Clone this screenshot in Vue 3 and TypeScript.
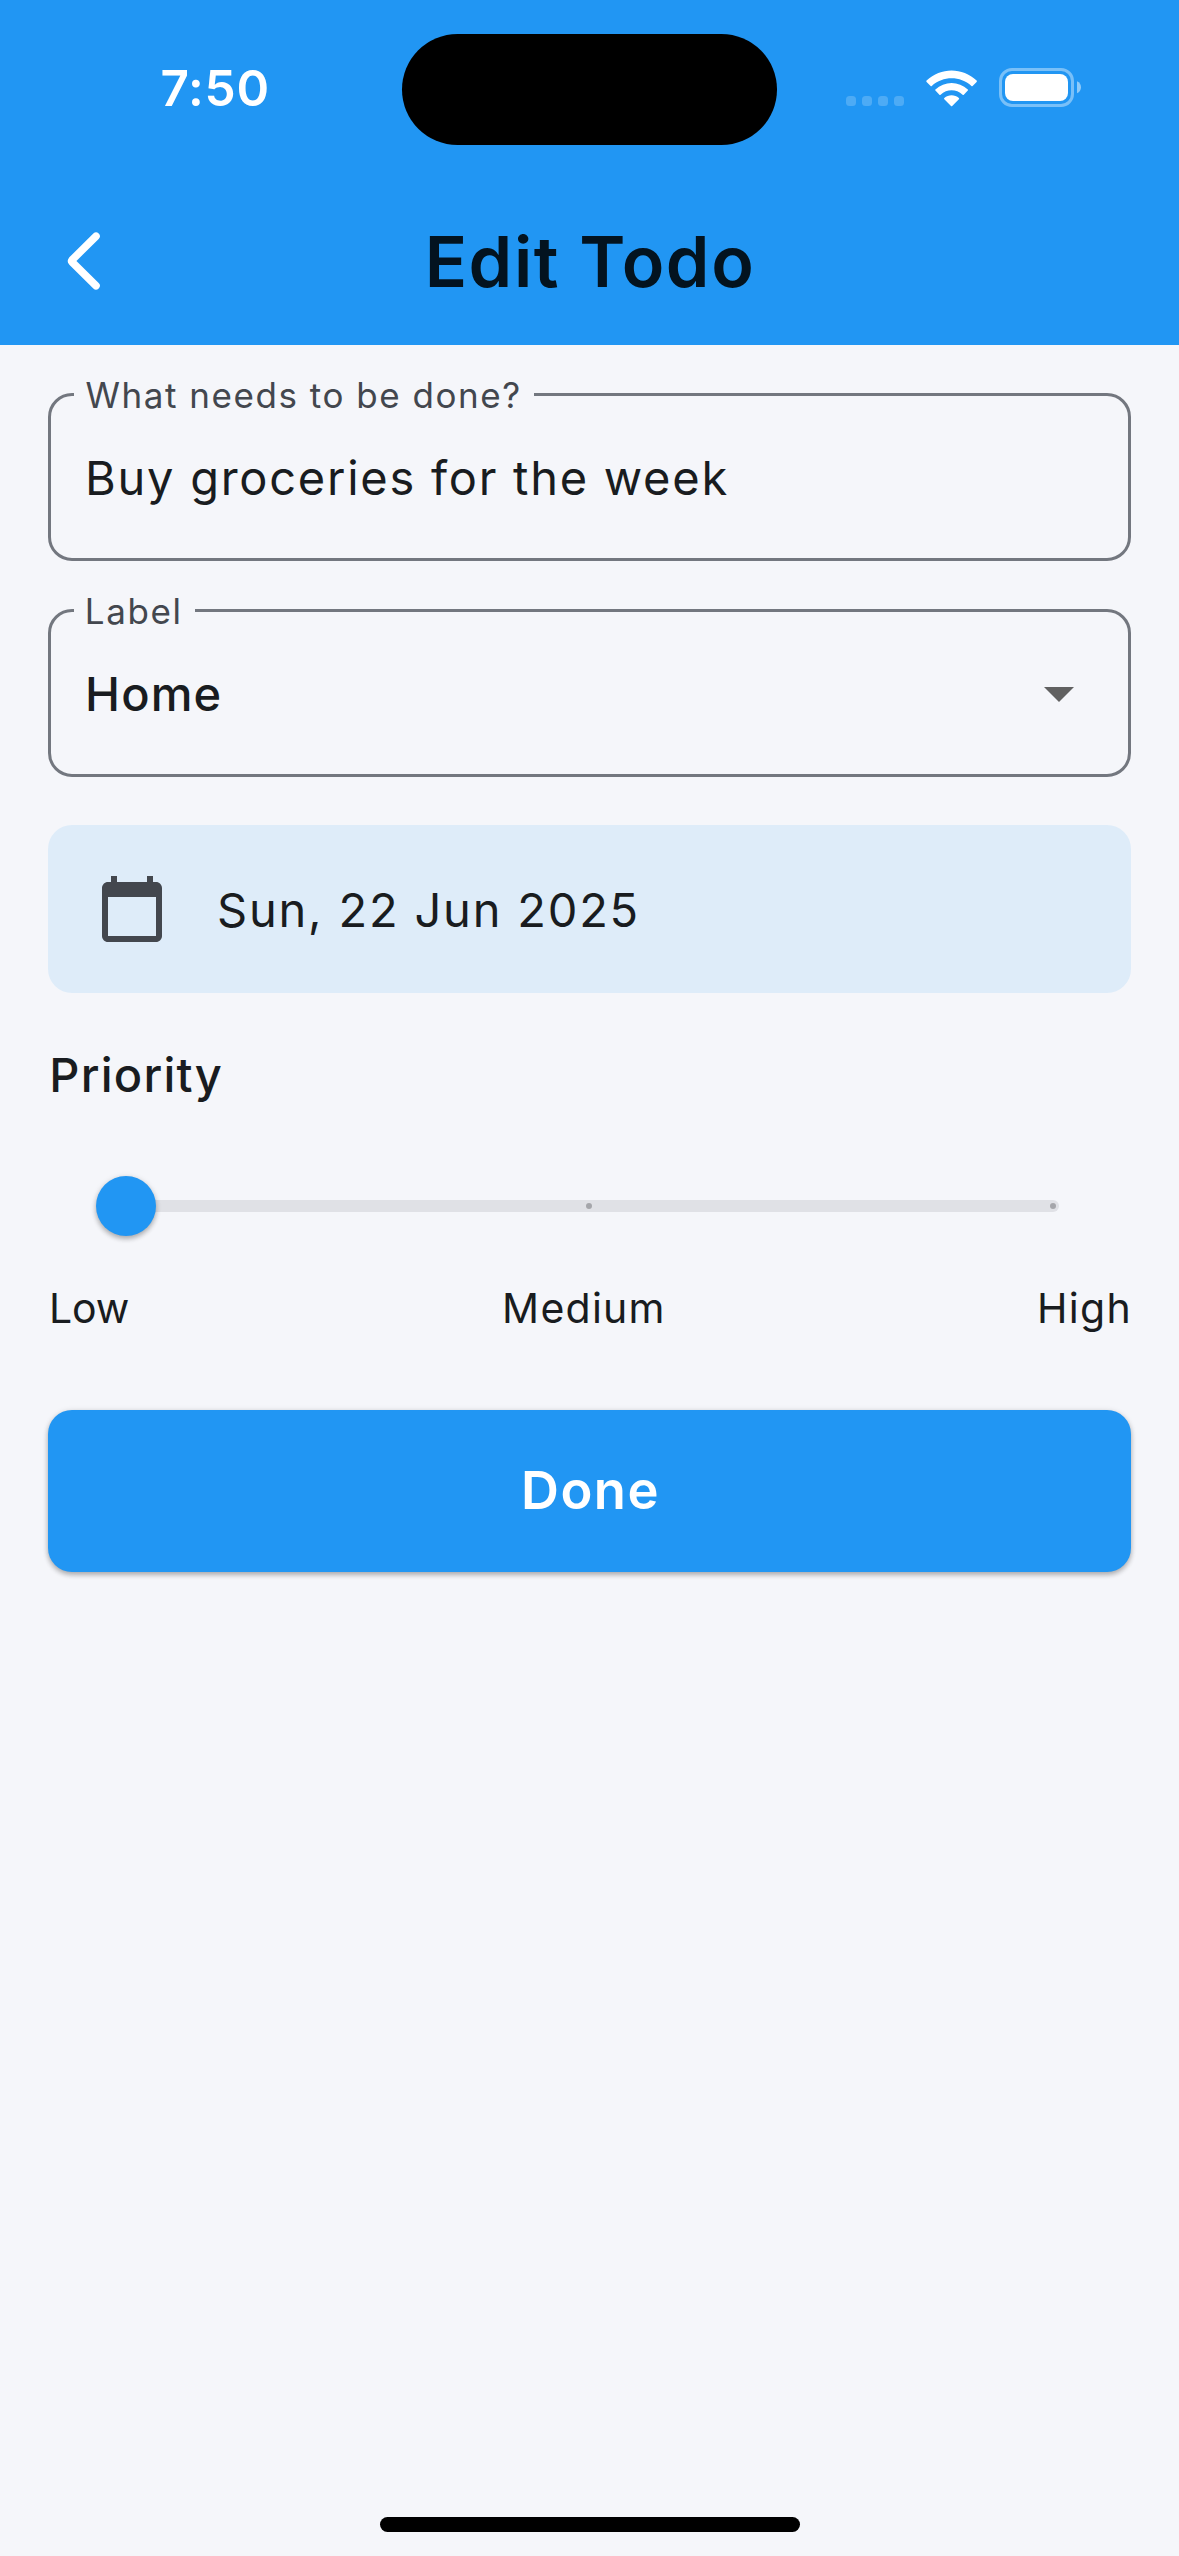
<script setup lang="ts">
import { ref } from 'vue'

const time = ref('7:50')
const title = ref('Edit Todo')
const task = ref('Buy groceries for the week')
const label = ref('Home')
const date = ref('Sun, 22 Jun 2025')
const cellularDots = [0, 1, 2, 3]
</script>

<template>
  <div class="screen">
    <header class="header">
      <div class="status-bar">
        <span class="time">{{ time }}</span>
        <div class="island"></div>
        <div class="indicators">
          <div class="cellular">
            <i v-for="dot in cellularDots" :key="dot"></i>
          </div>
          <svg class="wifi" width="52" height="39" viewBox="0 0 52 39">
            <g fill="#fff">
              <path d="M0.6 11.6 C0.2 12 0.2 12.5 0.6 12.9 L4.6 16.9 C5 17.3 5.4 17.3 5.8 16.9 C17 6.8 34.2 6.8 45.4 16.9 C45.8 17.3 46.2 17.3 46.6 16.9 L50.6 12.9 C51 12.5 51 12 50.6 11.6 C36.6 -1.9 14.6 -1.9 0.6 11.6 Z" />
              <path d="M9.4 20.4 C9 20.8 9 21.2 9.4 21.6 L13.4 25.7 C13.8 26.1 14.2 26 14.6 25.7 C20.9 19.9 30.3 19.9 36.6 25.7 C37 26 37.4 26.1 37.8 25.7 L41.8 21.6 C42.2 21.2 42.2 20.8 41.8 20.4 C32.8 11.7 18.4 11.7 9.4 20.4 Z" />
              <path d="M18.3 29 C17.9 29.4 17.9 29.9 18.3 30.3 L25 37 C25.4 37.4 25.8 37.4 26.2 37 L32.9 30.3 C33.3 29.9 33.3 29.4 32.9 29 C28.8 25.3 22.4 25.3 18.3 29 Z" />
            </g>
          </svg>
          <svg class="battery" width="84" height="39" viewBox="0 0 84 39">
            <rect x="1.5" y="1.5" width="72" height="36" rx="11.5" fill="none" stroke="#fff" stroke-opacity="0.4" stroke-width="3" />
            <rect x="6" y="6" width="63" height="27" rx="8" fill="#fff" />
            <path d="M78 13.3 C80.7 14.3 82 16.8 82 19.3 C82 21.8 80.7 24.3 78 25.3 Z" fill="#fff" fill-opacity="0.5" />
          </svg>
        </div>
      </div>
      <div class="app-bar">
        <svg class="back" width="40" height="64" viewBox="0 0 40 64">
          <path d="M33 7.2 L9 31 Q8.2 32 9 33 L33 56.8" fill="none" stroke="#fff" stroke-width="7.6" stroke-linecap="round" stroke-linejoin="round" />
        </svg>
        <h1 class="title">{{ title }}</h1>
      </div>
    </header>

    <main class="form">
      <div class="field">
        <span class="field-label task-label">What needs to be done?</span>
        <span class="field-value">{{ task }}</span>
      </div>

      <div class="field">
        <span class="field-label select-label">Label</span>
        <span class="field-value selected">{{ label }}</span>
        <svg class="caret" width="30" height="15" viewBox="0 0 30 15">
          <path d="M0 0 H30 L15 15 Z" fill="#616161" />
        </svg>
      </div>

      <div class="date">
        <svg width="72" height="72" viewBox="0 0 24 24">
          <path fill="#43474e" d="M20 3h-1V1h-2v2H7V1H5v2H4c-1.1 0-2 .9-2 2v16c0 1.1.9 2 2 2h16c1.1 0 2-.9 2-2V5c0-1.1-.9-2-2-2zm0 18H4V8h16v13z" />
        </svg>
        <span class="date-text">{{ date }}</span>
      </div>

      <h2 class="section">Priority</h2>

      <div class="slider">
        <div class="thumb"></div>
        <div class="track">
          <i class="tick"></i>
          <i class="tick"></i>
        </div>
      </div>

      <div class="scale">
        <span class="low">Low</span>
        <span class="medium">Medium</span>
        <span class="high">High</span>
      </div>

      <button class="done" type="button">Done</button>
    </main>

    <div class="home-indicator"></div>
  </div>
</template>

<style>
body {
  margin: 0;
  background: #f5f6fa;
}
</style>

<style scoped>
.screen {
  display: flex;
  flex-direction: column;
  align-items: center;
  box-sizing: border-box;
  width: 1179px;
  height: 2556px;
  padding-bottom: 24px;
  overflow: hidden;
  background: #f5f6fa;
  color: #191c20;
  font-family: Inter, Roboto, sans-serif;
  white-space: nowrap;
}

.header {
  width: 100%;
  height: 345px;
  background: #2196f3;
}

.status-bar {
  display: flex;
  align-items: flex-start;
  height: 177px;
}

.time {
  box-sizing: border-box;
  width: 402px;
  margin-top: 58px;
  padding-left: 160.5px;
  color: #fff;
  font-size: 49.5px;
  font-weight: 600;
  line-height: 60px;
  letter-spacing: 0.74px;
}

.island {
  width: 375px;
  height: 111px;
  margin-top: 33.5px;
  border-radius: 56px;
  background: #000;
}

.indicators {
  display: flex;
  align-items: flex-start;
  margin: 68px 0 0 69px;
}

.cellular {
  display: flex;
  gap: 6px;
  margin-top: 28px;
}

.cellular i {
  width: 10px;
  height: 10px;
  border-radius: 3.5px;
  background: rgba(255, 255, 255, 0.2);
}

.wifi {
  margin: 0.5px 0 0 22px;
}

.battery {
  margin-left: 21px;
}

.app-bar {
  display: grid;
  grid-template-columns: 168px 1fr 168px;
  align-items: center;
  height: 168px;
}

.back {
  margin: 0 0 1px 62.5px;
}

.title {
  margin: 0;
  padding: 1px 0 0 1px;
  color: #03131f;
  font-size: 70px;
  font-weight: 600;
  line-height: 84px;
  letter-spacing: 1.59px;
  text-align: center;
}

.form {
  display: flex;
  flex-direction: column;
  width: 1083px;
  padding-top: 48px;
}

.field {
  position: relative;
  display: flex;
  align-items: center;
  justify-content: space-between;
  box-sizing: border-box;
  height: 168px;
  margin-bottom: 48px;
  padding: 2px 54px 0 34px;
  border: 3px solid #73777f;
  border-radius: 24px;
}

.field-label {
  position: absolute;
  top: -22px;
  left: 22.6px;
  background: #f5f6fa;
  color: #43474e;
  font-size: 35px;
  line-height: 42px;
}

.task-label {
  padding: 0 12px 0 12px;
  letter-spacing: 1.53px;
}

.select-label {
  padding: 0 12px 0 11.2px;
  letter-spacing: 1.6px;
}

.field-value {
  font-size: 47px;
  line-height: 60px;
  letter-spacing: 1.74px;
}

.selected {
  font-weight: 500;
  letter-spacing: 1.16px;
}

.date {
  display: flex;
  align-items: center;
  height: 168px;
  padding-left: 48px;
  border-radius: 24px;
  background: #deecf9;
}

.date-text {
  margin-left: 49px;
  padding-top: 2px;
  font-size: 47px;
  line-height: 60px;
  letter-spacing: 1.8px;
}

.section {
  margin: 52px 0 0 1.3px;
  font-size: 47px;
  font-weight: 500;
  line-height: 60px;
  letter-spacing: 1.24px;
}

.slider {
  display: flex;
  align-items: center;
  height: 144px;
  margin-top: 29px;
  padding: 0 72px 0 48px;
}

.thumb {
  z-index: 1;
  width: 60px;
  height: 60px;
  border-radius: 50%;
  background: #2196f3;
  box-shadow: 0 3px 5px rgba(0, 0, 0, 0.24), 0 1px 6px rgba(0, 0, 0, 0.12);
}

.track {
  display: flex;
  align-items: center;
  justify-content: space-between;
  flex: 1;
  box-sizing: border-box;
  height: 12px;
  margin-left: -30px;
  padding: 0 3px 0 460px;
  border-radius: 6px;
  background: #e0e1e6;
}

.tick {
  width: 6px;
  height: 6px;
  border-radius: 50%;
  background: #a5a6ab;
}

.scale {
  display: flex;
  justify-content: space-between;
  margin: 5px -1px 0 1px;
  font-size: 41px;
  line-height: 50px;
}

.low {
  padding-right: 2px;
  letter-spacing: -0.2px;
}

.medium {
  letter-spacing: 1.26px;
}

.high {
  letter-spacing: 1.32px;
}

.done {
  height: 162px;
  margin-top: 77px;
  padding: 0 0 3px 2px;
  border: none;
  border-radius: 24px;
  background: #2196f3;
  box-shadow: 0 3px 5px rgba(0, 0, 0, 0.24), 0 1px 6px rgba(0, 0, 0, 0.12);
  color: #fff;
  font-family: inherit;
  font-size: 52.5px;
  font-weight: 600;
  line-height: 64px;
  letter-spacing: 1.43px;
}

.home-indicator {
  width: 420px;
  height: 15px;
  margin-top: auto;
  border-radius: 8px;
  background: #000;
}
</style>
